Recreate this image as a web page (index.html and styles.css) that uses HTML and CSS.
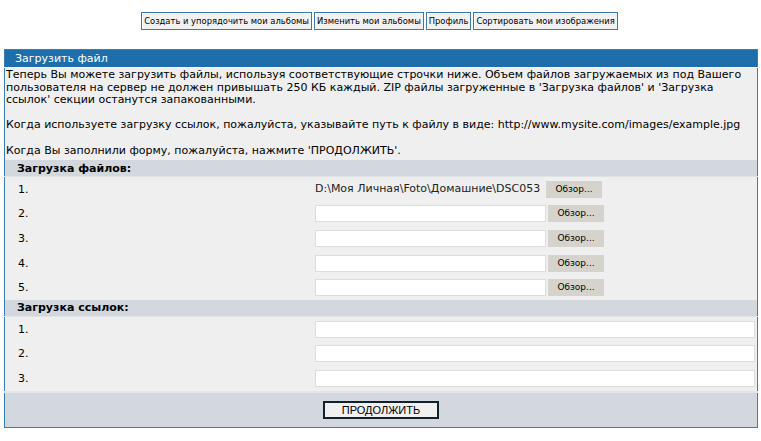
FILE: index.html
```html
<!DOCTYPE html>
<html lang="ru">
<head>
    <meta charset="UTF-8">
    <title>Загрузить файл</title>
    <link rel="stylesheet" href="styles.css">
</head>
<body>
    <div class="nav">
        <a class="nav-button" href="#">Создать и упорядочить мои альбомы</a>
        <a class="nav-button" href="#">Изменить мои альбомы</a>
        <a class="nav-button" href="#">Профиль</a>
        <a class="nav-button" href="#">Сортировать мои изображения</a>
    </div>

    <form class="upload">
        <table class="maintable">
            <tr>
                <td class="tableh1" colspan="2">Загрузить файл</td>
            </tr>
            <tr>
                <td class="intro" colspan="2">
                    Теперь Вы можете загрузить файлы, используя соответствующие строчки ниже. Объем файлов загружаемых из под Вашего пользователя на сервер не должен привышать 250 КБ каждый. ZIP файлы загруженные в 'Загрузка файлов' и 'Загрузка ссылок' секции останутся запакованными.<br><br>
                    Когда используете загрузку ссылок, пожалуйста, указывайте путь к файлу в виде: http://www.mysite.com/images/example.jpg<br><br>
                    Когда Вы заполнили форму, пожалуйста, нажмите 'ПРОДОЛЖИТЬ'.
                </td>
            </tr>
            <tr>
                <td class="tableh2" colspan="2">Загрузка файлов:</td>
            </tr>
            <tr class="row">
                <td class="num">1.</td>
                <td><span class="file-name">D:\Моя Личная\Foto\Домашние\DSC053</span><span class="browse">Обзор...</span></td>
            </tr>
            <tr class="row">
                <td class="num">2.</td>
                <td><input class="file-input" type="text"><span class="browse">Обзор...</span></td>
            </tr>
            <tr class="row">
                <td class="num">3.</td>
                <td><input class="file-input" type="text"><span class="browse">Обзор...</span></td>
            </tr>
            <tr class="row">
                <td class="num">4.</td>
                <td><input class="file-input" type="text"><span class="browse">Обзор...</span></td>
            </tr>
            <tr class="row">
                <td class="num">5.</td>
                <td><input class="file-input" type="text"><span class="browse">Обзор...</span></td>
            </tr>
            <tr>
                <td class="tableh2" colspan="2">Загрузка ссылок:</td>
            </tr>
            <tr class="row">
                <td class="num">1.</td>
                <td><input class="url-input" type="text"></td>
            </tr>
            <tr class="row">
                <td class="num">2.</td>
                <td><input class="url-input" type="text"></td>
            </tr>
            <tr class="row">
                <td class="num">3.</td>
                <td><input class="url-input" type="text"></td>
            </tr>
            <tr>
                <td class="tablef" colspan="2"><button class="submit" type="button">ПРОДОЛЖИТЬ</button></td>
            </tr>
        </table>
    </form>
</body>
</html>
```

FILE: styles.css
```css
body {
    margin: 0;
    padding: 12px 3px 0 4px;
    font-family: "DejaVu Sans", Verdana, sans-serif;
    font-size: 11px;
    color: #000;
    background: #fff;
}
.nav {
    display: flex;
    justify-content: center;
    gap: 2px;
    height: 18px;
    margin-bottom: 19px;
    padding-right: 3px;
}
.nav-button {
    display: block;
    border: 1px solid #3a78a8;
    background: #f1f1f1;
    color: #000;
    text-decoration: none;
    font-size: 8.4px;
    line-height: 16px;
    padding: 0 2px;
    box-shadow: inset 1px 1px 0 #fff;
}
.upload {
    margin: 0;
}
.maintable {
    width: 100%;
    border-collapse: collapse;
    border: 1px solid #3a7fb4;
    background: #efefef;
}
.maintable td {
    padding: 0;
}
.tableh1 {
    background: #1d6eaa;
    color: #fff;
    height: 17px;
    padding-left: 10px !important;
    border-bottom: 1px solid #fff;
}
.intro {
    padding: 1px 2px 2px 1px !important;
    line-height: 12.6px;
    height: 89px;
    vertical-align: top;
}
.tableh2 {
    background: #d2d8dd;
    font-weight: bold;
    height: 16px;
    padding-left: 12px !important;
    border-bottom: 1px solid #dfe3e6;
}
.row td {
    height: 24.6px;
    vertical-align: middle;
}
.num {
    width: 297px;
    padding-left: 13px !important;
}
.file-name {
    display: inline-block;
    width: 229px;
    overflow: hidden;
    white-space: nowrap;
    height: 16px;
    line-height: 16px;
    vertical-align: middle;
    color: #222;
}
.file-input, .url-input {
    box-sizing: border-box;
    height: 17px;
    border: 1px solid #dcdcdc;
    background: #fff;
    margin: 0;
    padding: 0;
    vertical-align: middle;
}
.file-input {
    width: 231px;
}
.url-input {
    width: 440px;
}
.browse {
    display: inline-block;
    margin-left: 2px;
    width: 56px;
    height: 17px;
    line-height: 17px;
    background: #d6d3cc;
    font-size: 9px;
    text-align: center;
    vertical-align: middle;
}
.tablef {
    background: #d2d8dd;
    height: 34px;
    text-align: center;
    border-top: 2px solid #e2e6e9;
    vertical-align: middle;
}
.submit {
    width: 116px;
    height: 18px;
    border: 2px solid #13212f;
    background: #f0f0f0;
    font-family: "Liberation Sans", Arial, sans-serif;
    font-size: 11px;
    padding: 0;
}
```
